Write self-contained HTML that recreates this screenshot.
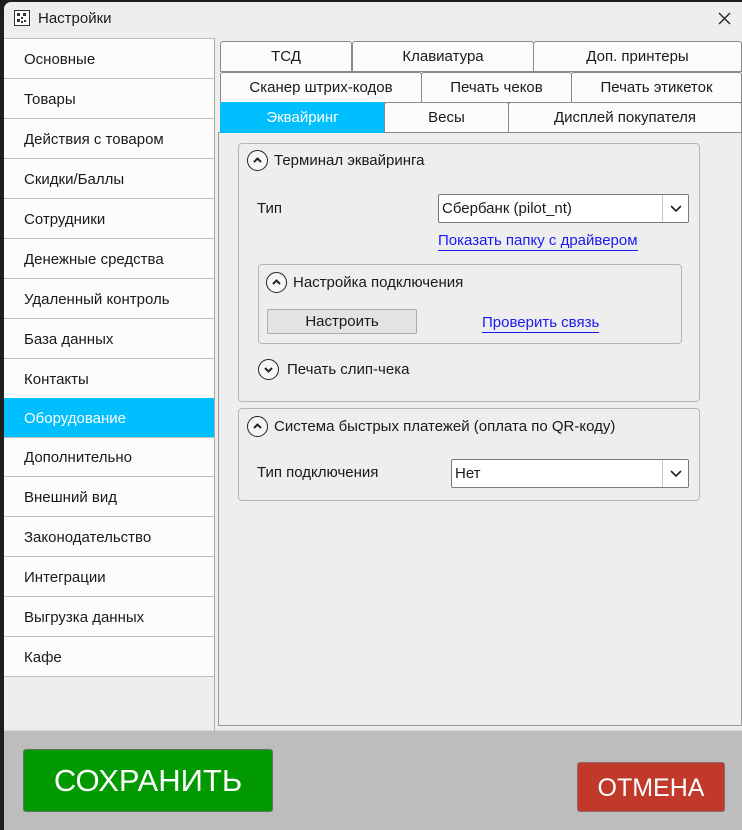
<!DOCTYPE html>
<html><head><meta charset="utf-8"><style>
*{box-sizing:border-box;margin:0;padding:0}
body{width:742px;height:828px;background:#1e1e1e;font-family:"Segoe UI","Liberation Sans","DejaVu Sans",sans-serif;font-size:15px;color:#1a1a1a;position:relative;overflow:hidden}
.win{position:absolute;left:4px;top:2px;width:740px;height:828px;background:#eeeeee;border-top-left-radius:7px;overflow:hidden}
.a{position:absolute}
.item{position:absolute;left:0;width:210px;height:40px;background:#fcfcfc;border-bottom:1px solid #bdbdbd;padding-left:20px;line-height:41px;font-size:15px}
.sel{background:#00bfff;color:#fff}
.tab{position:absolute;height:31px;background:#fcfcfc;border:1px solid #8a8a8a;border-radius:3px 3px 0 0;text-align:center;line-height:30px;font-size:15px}
.grp{position:absolute;border:1px solid #b5b5b5;border-radius:4px}
.circ{position:absolute;width:21px;height:21px;border:1.5px solid #222;border-radius:50%;background:#f6f6f6}
.circ svg{position:absolute;left:4px;top:4px}
.combo{position:absolute;height:29px;background:#fff;border:1px solid #7a7a7a;border-radius:2px;line-height:28px;padding-left:3px;font-size:15px}
.combo .dd{position:absolute;right:0;top:0;width:26px;height:27px;border-left:1px solid #c8c8c8}
.link{position:absolute;color:#1a1af0;border-bottom:1px solid #1a1af0;line-height:18px;font-size:15px}
</style></head><body>
<div class="win">
 <svg class="a" style="left:10px;top:8px" width="16" height="16" viewBox="0 0 16 16"><rect x="0.5" y="0.5" width="15" height="15" fill="#fff" stroke="#333"/><rect x="3" y="3" width="3" height="3" fill="#333"/><rect x="9" y="3" width="3" height="3" fill="#333"/><rect x="3" y="9" width="3" height="3" fill="#333"/><rect x="7" y="7" width="2" height="2" fill="#333"/><rect x="10" y="10" width="2" height="2" fill="#333"/><rect x="7" y="11" width="2" height="2" fill="#333"/></svg>
 <div class="a" style="left:34px;top:8px;font-size:15px">Настройки</div>
 <svg class="a" style="left:714px;top:10px" width="13" height="13" viewBox="0 0 13 13"><path d="M1 1L12 12M12 1L1 12" stroke="#222" stroke-width="1.3"/></svg>

 <div class="a" style="left:0;top:36px;width:210px;height:692px;background:#eeeeee;border-top:1px solid #bdbdbd"></div>
 <div class="a" style="left:210px;top:36px;width:1px;height:692px;background:#a8a8a8"></div>
 <div class="item" style="top:37px">Основные</div>
 <div class="item" style="top:77px">Товары</div>
 <div class="item" style="top:117px">Действия с товаром</div>
 <div class="item" style="top:157px">Скидки/Баллы</div>
 <div class="item" style="top:197px">Сотрудники</div>
 <div class="item" style="top:237px">Денежные средства</div>
 <div class="item" style="top:277px">Удаленный контроль</div>
 <div class="item" style="top:317px">База данных</div>
 <div class="item" style="top:357px">Контакты</div>
 <div class="item sel" style="top:396px">Оборудование</div>
 <div class="item" style="top:436px;height:39px;line-height:39px">Дополнительно</div>
 <div class="item" style="top:475px">Внешний вид</div>
 <div class="item" style="top:515px">Законодательство</div>
 <div class="item" style="top:555px">Интеграции</div>
 <div class="item" style="top:595px">Выгрузка данных</div>
 <div class="item" style="top:635px">Кафе</div>

 <div class="a" style="left:214px;top:130px;width:524px;height:594px;border:1px solid #9a9a9a;background:#eeeeee"></div>

 <div class="tab" style="left:216px;top:39px;width:132px">ТСД</div>
 <div class="tab" style="left:348px;top:39px;width:182px">Клавиатура</div>
 <div class="tab" style="left:529px;top:39px;width:209px">Доп. принтеры</div>
 <div class="tab" style="left:216px;top:70px;width:202px">Сканер штрих-кодов</div>
 <div class="tab" style="left:417px;top:70px;width:151px">Печать чеков</div>
 <div class="tab" style="left:567px;top:70px;width:171px">Печать этикеток</div>
 <div class="tab" style="left:216px;top:100px;width:165px;background:#00bfff;color:#fff;border-color:#00bfff">Эквайринг</div>
 <div class="tab" style="left:380px;top:100px;width:125px">Весы</div>
 <div class="tab" style="left:504px;top:100px;width:234px">Дисплей покупателя</div>

 <div class="grp" style="left:234px;top:141px;width:462px;height:259px"></div>
 <div class="circ" style="left:243px;top:148px"><svg width="11" height="11" viewBox="0 0 11 11"><path d="M2 7L5.5 3.5L9 7" fill="none" stroke="#222" stroke-width="2"/></svg></div>
 <div class="a" style="left:270px;top:150px">Терминал эквайринга</div>
 <div class="a" style="left:253px;top:198px">Тип</div>
 <div class="combo" style="left:434px;top:192px;width:251px">Сбербанк (pilot_nt)<div class="dd"><svg style="position:absolute;left:7px;top:9px" width="12" height="9" viewBox="0 0 12 9"><path d="M1 2L6 7L11 2" fill="none" stroke="#222" stroke-width="1.6"/></svg></div></div>
 <div class="link" style="left:434px;top:230px">Показать папку с драйвером</div>

 <div class="grp" style="left:254px;top:262px;width:424px;height:80px"></div>
 <div class="circ" style="left:262px;top:270px"><svg width="11" height="11" viewBox="0 0 11 11"><path d="M2 7L5.5 3.5L9 7" fill="none" stroke="#222" stroke-width="2"/></svg></div>
 <div class="a" style="left:289px;top:272px">Настройка подключения</div>
 <div class="a" style="left:263px;top:307px;width:150px;height:25px;background:#e3e3e3;border:1px solid #acacac;border-radius:2px;text-align:center;line-height:24px">Настроить</div>
 <div class="link" style="left:478px;top:312px">Проверить связь</div>

 <div class="circ" style="left:254px;top:357px"><svg width="11" height="11" viewBox="0 0 11 11"><path d="M2 4L5.5 7.5L9 4" fill="none" stroke="#222" stroke-width="2"/></svg></div>
 <div class="a" style="left:283px;top:359px">Печать слип-чека</div>

 <div class="grp" style="left:234px;top:406px;width:462px;height:93px"></div>
 <div class="circ" style="left:243px;top:414px"><svg width="11" height="11" viewBox="0 0 11 11"><path d="M2 7L5.5 3.5L9 7" fill="none" stroke="#222" stroke-width="2"/></svg></div>
 <div class="a" style="left:270px;top:416px">Система быстрых платежей (оплата по QR-коду)</div>
 <div class="a" style="left:253px;top:462px">Тип подключения</div>
 <div class="combo" style="left:447px;top:457px;width:238px">Нет<div class="dd"><svg style="position:absolute;left:7px;top:9px" width="12" height="9" viewBox="0 0 12 9"><path d="M1 2L6 7L11 2" fill="none" stroke="#222" stroke-width="1.6"/></svg></div></div>

 <div class="a" style="left:0;top:728px;width:740px;height:100px;background:#bdbdbd;border-top:1px solid #d8d8d8"></div>
 <div class="a" style="left:19px;top:747px;width:250px;height:63px;background:#009900;border:1px solid #5a7a5a;border-radius:3px;color:#fff;font-size:31px;text-align:center;line-height:61px">СОХРАНИТЬ</div>
 <div class="a" style="left:573px;top:760px;width:148px;height:50px;background:#c0392b;border:1px solid #8a6a6a;border-radius:3px;color:#fff;font-size:25px;text-align:center;line-height:50px">ОТМЕНА</div>
</div>
</body></html>
